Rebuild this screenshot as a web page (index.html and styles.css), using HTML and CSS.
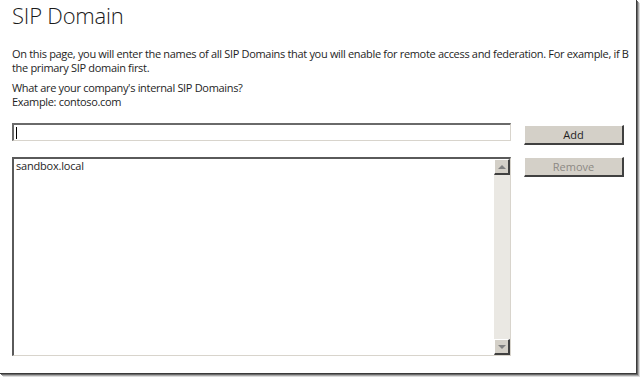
FILE: index.html
```html
<!DOCTYPE html>
<html lang="en">
<head>
    <meta charset="UTF-8">
    <title>SIP Domain</title>
    <link rel="stylesheet" href="styles.css">
</head>
<body>
    <div class="frame">
        <div class="page">
            <h1 class="title">SIP Domain</h1>
            <p class="intro">On this page, you will enter the names of all SIP Domains that you will enable for remote access and federation. For example, if B<br>the primary SIP domain first.</p>
            <p class="question">What are your company's internal SIP Domains?<br>Example: contoso.com</p>

            <div class="row top-row">
                <div class="textbox"><span class="caret"></span></div>
                <button class="btn add">Add</button>
            </div>

            <div class="row list-row">
                <div class="listbox">
                    <div class="items">
                        <div class="item">sandbox.local</div>
                    </div>
                    <div class="scrollbar">
                        <div class="arrow up"><span></span></div>
                        <div class="track"></div>
                        <div class="arrow down"><span></span></div>
                    </div>
                </div>
                <button class="btn" disabled>Remove</button>
            </div>
        </div>
    </div>
</body>
</html>
```

FILE: styles.css
```css
* {
    margin: 0;
    padding: 0;
    box-sizing: border-box;
}

body {
    width: 640px;
    height: 377px;
    background: #fff;
    font-family: "Open Sans", "Noto Sans", sans-serif;
    color: #1e1e1e;
    overflow: hidden;
}

.frame {
    width: 637px;
    height: 374px;
    border-right: 1px solid #3a3a3a;
    border-bottom: 1px solid #3a3a3a;
    box-shadow: 1px 1px 0 #6a6a6a, 2px 2px 0 #a8a8a8, 3px 3px 0 #dcdcdc;
    overflow: hidden;
}

.page {
    padding: 1px 0 0 12px;
}

.title {
    font-size: 22px;
    font-weight: 300;
    line-height: 28px;
    color: #1a1a1a;
    letter-spacing: -0.2px;
}

.intro,
.question {
    font-size: 11px;
    line-height: 14px;
    white-space: nowrap;
    letter-spacing: -0.32px;
}

.intro {
    margin-top: 18px;
}

.question {
    margin-top: 6px;
}

.row {
    display: flex;
    align-items: flex-start;
    gap: 13px;
}

.top-row {
    margin-top: 14px;
}

.list-row {
    margin-top: 12px;
}

.textbox {
    width: 499px;
    height: 18px;
    border-top: 2px solid #6a6a6a;
    border-left: 2px solid #6a6a6a;
    border-bottom: 1px solid #d8d4cc;
    border-right: 1px solid #d8d4cc;
    padding: 2px 0 0 2px;
}

.caret {
    display: block;
    width: 1px;
    height: 12px;
    background: #000;
}

.btn {
    width: 100px;
    height: 20px;
    font-family: inherit;
    font-size: 11px;
    color: #1e1e1e;
    background: #d4d0c8;
    border-top: 1px solid #fff;
    border-left: 1px solid #fff;
    border-bottom: 2px solid #404040;
    border-right: 2px solid #404040;
}

.add {
    margin-top: 2px;
}

.btn:disabled {
    color: #8c8984;
}

.listbox {
    width: 499px;
    height: 199px;
    display: flex;
    border-top: 2px solid #5a5a5a;
    border-left: 2px solid #5a5a5a;
    border-bottom: 1px solid #d8d4cc;
    border-right: 1px solid #d8d4cc;
}

.items {
    flex: 1;
    padding: 0 2px;
}

.item {
    font-size: 11px;
    line-height: 14px;
    letter-spacing: -0.2px;
}

.scrollbar {
    width: 16px;
    display: flex;
    flex-direction: column;
    background: #eae8e3;
}

.track {
    flex: 1;
}

.arrow {
    height: 16px;
    background: #d4d0c8;
    border-top: 1px solid #fff;
    border-left: 1px solid #fff;
    border-bottom: 2px solid #404040;
    border-right: 2px solid #404040;
    display: flex;
    align-items: center;
    justify-content: center;
}

.arrow span {
    width: 0;
    height: 0;
    border-left: 4px solid transparent;
    border-right: 4px solid transparent;
}

.arrow.up span {
    border-bottom: 4px solid #808080;
}

.arrow.down span {
    border-top: 4px solid #808080;
}
```
